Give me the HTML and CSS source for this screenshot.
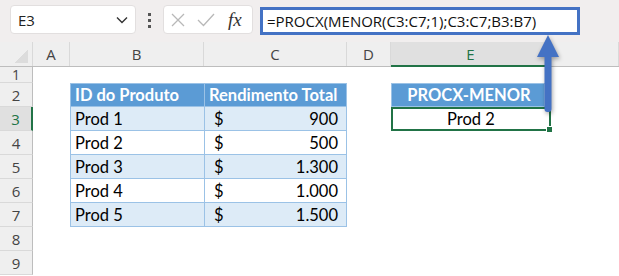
FILE: index.html
```html
<!doctype html>
<html lang="pt">
    <head>
        <meta charset="UTF-8" />
        <meta name="viewport" content="width=device-width, initial-scale=1.0" />
        <title>PROCX-MENOR</title>
        <link rel="stylesheet" href="styles.css">
    </head>
    <body>
        <div class="topbar">
            <div class="namebox">
                <span>E3</span>
                <svg class="chevron" width="12" height="8" viewBox="0 0 12 8">
                    <path d="M1 1.5 L6 6.5 L11 1.5" fill="none" stroke="#333" stroke-width="1.4" />
                </svg>
            </div>
            <div class="dots"><i></i><i></i><i></i></div>
            <div class="fxbox">
                <svg width="14" height="14" viewBox="0 0 14 14">
                    <path d="M1 1 L13 13 M13 1 L1 13" stroke="#b8b8b8" stroke-width="1.3" />
                </svg>
                <svg width="18" height="14" viewBox="0 0 18 14">
                    <path d="M1 7 L6.5 12.5 L17 1" fill="none" stroke="#b8b8b8" stroke-width="1.3" />
                </svg>
                <span class="fx">fx</span>
            </div>
            <div class="formula">=PROCX(MENOR(C3:C7;1);C3:C7;B3:B7)</div>
        </div>

        <div class="sheet">
            <div class="row colhead">
                <div class="corner"></div>
                <div>A</div>
                <div>B</div>
                <div>C</div>
                <div>D</div>
                <div class="selcol">E</div>
                <div></div>
            </div>
            <div class="row first">
                <div class="rh">1</div>
                <div></div><div></div><div></div><div></div><div></div><div></div>
            </div>
            <div class="row">
                <div class="rh">2</div>
                <div></div>
                <div class="cell th left">ID do Produto</div>
                <div class="cell th">Rendimento Total</div>
                <div></div>
                <div class="cell th center">PROCX-MENOR</div>
                <div></div>
            </div>
            <div class="row">
                <div class="rh selrow">3</div>
                <div></div>
                <div class="cell band">Prod 1</div>
                <div class="cell band money"><span>$</span><span>900</span></div>
                <div></div>
                <div class="active">Prod 2<b class="handle"></b></div>
                <div></div>
            </div>
            <div class="row">
                <div class="rh">4</div>
                <div></div>
                <div class="cell">Prod 2</div>
                <div class="cell money"><span>$</span><span>500</span></div>
                <div></div><div></div><div></div>
            </div>
            <div class="row">
                <div class="rh">5</div>
                <div></div>
                <div class="cell band">Prod 3</div>
                <div class="cell band money"><span>$</span><span>1.300</span></div>
                <div></div><div></div><div></div>
            </div>
            <div class="row">
                <div class="rh">6</div>
                <div></div>
                <div class="cell">Prod 4</div>
                <div class="cell money"><span>$</span><span>1.000</span></div>
                <div></div><div></div><div></div>
            </div>
            <div class="row">
                <div class="rh">7</div>
                <div></div>
                <div class="cell band last">Prod 5</div>
                <div class="cell band money last"><span>$</span><span>1.500</span></div>
                <div></div><div></div><div></div>
            </div>
            <div class="row">
                <div class="rh">8</div>
                <div></div><div></div><div></div><div></div><div></div><div></div>
            </div>
            <div class="row">
                <div class="rh">9</div>
                <div></div><div></div><div></div><div></div><div></div><div></div>
            </div>

            <svg class="arrow" width="30" height="84" viewBox="0 0 30 84">
                <path d="M13 1 L24 23 L16.5 23 L16.5 75 Q16.5 78 13.5 78 L12.5 78 Q9.5 78 9.5 75 L9.5 23 L2 23 Z" fill="#4472c4" />
            </svg>
        </div>
    </body>
</html>
```

FILE: styles.css
```css
body {
    margin: 0;
    width: 619px;
    height: 276px;
    overflow: hidden;
    background: #fff;
    font-family: Lato, "Liberation Sans", sans-serif;
    color: #000;
}
.topbar {
    height: 42px;
    background: #f1eeee;
    display: flex;
    align-items: flex-start;
    padding-left: 10px;
    box-sizing: border-box;
}
.namebox {
    margin-top: 5px;
    width: 126px;
    height: 29px;
    box-sizing: border-box;
    background: #fff;
    border: 1px solid #e2dfdf;
    border-radius: 4px;
    display: flex;
    align-items: center;
    justify-content: space-between;
    padding: 0 7px 0 7px;
    font-family: "Open Sans", sans-serif;
    font-size: 15px;
    color: #222;
}
.dots {
    width: 27px;
    margin-top: 13px;
    display: flex;
    flex-direction: column;
    align-items: center;
    gap: 3px;
}
.dots i {
    width: 3px;
    height: 3px;
    background: #555;
}
.fxbox {
    margin-top: 5px;
    width: 90px;
    height: 29px;
    box-sizing: border-box;
    background: #fff;
    border: 1px solid #e2dfdf;
    border-radius: 4px;
    display: flex;
    align-items: center;
    padding-left: 7px;
    gap: 12px;
}
.fx {
    font-family: "Liberation Serif", serif;
    font-style: italic;
    font-size: 19px;
    color: #333;
    margin-left: 1px;
}
.formula {
    margin-top: 7px;
    margin-left: 7px;
    width: 320px;
    height: 28px;
    box-sizing: border-box;
    background: #fff;
    border: 3px solid #4472c4;
    padding-left: 4px;
    font-family: "Open Sans", sans-serif;
    font-size: 15px;
    line-height: 22px;
    color: #111;
    white-space: nowrap;
}
.sheet {
    position: relative;
}
.row {
    display: grid;
    grid-template-columns: 33px 37px 134px 143px 44px 160px 1fr;
    height: 24px;
}
.row.first {
    height: 16px;
}
.row.first .rh {
    font-size: 14px;
    line-height: 15px;
    align-items: flex-start;
}
.colhead {
    background: #efefef;
    border-bottom: 1px solid #bdbdbd;
    font-family: "Open Sans", sans-serif;
    font-size: 15px;
    color: #444;
    height: 25px;
    box-sizing: border-box;
}
.colhead div {
    display: flex;
    align-items: center;
    justify-content: center;
    border-right: 1px solid #d9d9d9;
}
.corner {
    position: relative;
    background: linear-gradient(135deg, transparent 60%, #dcdcdc 60%) no-repeat right 4px bottom 3px / 18px 16px;
}
.colhead .selcol {
    background: #e0e0e0;
    color: #217346;
    border-bottom: 2px solid #217346;
    margin-bottom: -1px;
}
.rh {
    background: #efefef;
    border-right: 1px solid #bdbdbd;
    border-bottom: 1px solid #d9d9d9;
    font-family: "Open Sans", sans-serif;
    font-size: 15px;
    color: #444;
    display: flex;
    align-items: center;
    justify-content: center;
    box-sizing: border-box;
}
.rh.selrow {
    background: #e0e0e0;
    color: #217346;
    border-right: 2px solid #217346;
}
.cell {
    font-size: 16.5px;
    display: flex;
    align-items: center;
    padding: 0 4px;
    border-left: 1px solid #9bc2e6;
    border-bottom: 1px solid #9bc2e6;
    box-sizing: border-box;
    white-space: nowrap;
}
.cell + .cell {
    border-right: 1px solid #9bc2e6;
}
.cell.band {
    background: #ddebf7;
}
.cell.th {
    background: #5b9bd5;
    color: #fff;
    font-weight: bold;
    border-top: 1px solid #9bc2e6;
    padding-right: 2px;
}
.cell.th.center {
    justify-content: center;
    border-right: 1px solid #9bc2e6;
    margin-right: 6px;
}
.money {
    justify-content: space-between;
    padding: 0 8px 0 9px;
}
.active {
    position: relative;
    border: 2px solid #217346;
    font-size: 16.5px;
    display: flex;
    align-items: center;
    justify-content: center;
    box-sizing: border-box;
}
.handle {
    position: absolute;
    right: -4px;
    bottom: -4px;
    width: 5px;
    height: 5px;
    background: #217346;
    border: 1px solid #fff;
}
.arrow {
    position: absolute;
    left: 535px;
    top: -8px;
    filter: drop-shadow(1px 2px 2px rgba(0, 0, 0, 0.35));
}
```
